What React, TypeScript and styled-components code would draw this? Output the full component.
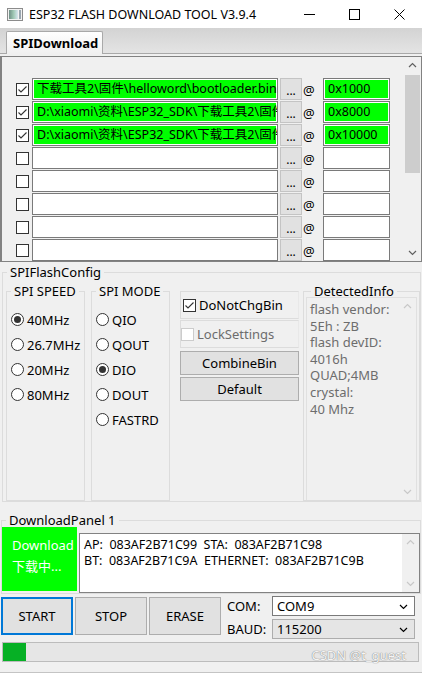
import React from 'react';
import styled, { createGlobalStyle } from 'styled-components';

const GlobalStyle = createGlobalStyle`
  html, body { margin: 0; padding: 0; background: #f0f0f0; }
  body {
    font-family: "Noto Sans", "Noto Sans CJK SC", sans-serif;
    font-size: 12.5px;
    color: #000;
  }
  * { box-sizing: border-box; }
`;

const files = [
  { on: true, path: '下载工具2\\固件\\helloword\\bootloader.bin', addr: '0x1000' },
  { on: true, path: 'D:\\xiaomi\\资料\\ESP32_SDK\\下载工具2\\固件', addr: '0x8000' },
  { on: true, path: 'D:\\xiaomi\\资料\\ESP32_SDK\\下载工具2\\固件', addr: '0x10000' },
  { on: false, path: '', addr: '' },
  { on: false, path: '', addr: '' },
  { on: false, path: '', addr: '' },
  { on: false, path: '', addr: '' },
  { on: false, path: '', addr: '' },
];

const speeds = [
  { label: '40MHz', on: true },
  { label: '26.7MHz', on: false },
  { label: '20MHz', on: false },
  { label: '80MHz', on: false },
];

const modes = [
  { label: 'QIO', on: false },
  { label: 'QOUT', on: false },
  { label: 'DIO', on: true },
  { label: 'DOUT', on: false },
  { label: 'FASTRD', on: false },
];

const detected = ['flash vendor:', '5Eh : ZB', 'flash devID:', '4016h', 'QUAD;4MB', 'crystal:', '40 Mhz'];

const Window = styled.div`
  position: relative;
  width: 422px;
  height: 673px;
  background: #f0f0f0;
  display: flex;
  flex-direction: column;
  overflow: hidden;
  border-bottom: 1px solid #c4c4c4;
`;

const TitleBar = styled.div`
  height: 28px;
  flex-shrink: 0;
  background: #fff;
  display: flex;
  align-items: center;
  padding-left: 7px;
`;

const Title = styled.span`
  flex: 1;
  margin-left: 6px;
  font-size: 12.5px;
  color: #000;
  white-space: nowrap;
`;

const WinButton = styled.span`
  width: 45px;
  height: 28px;
  display: flex;
  align-items: center;
  justify-content: center;
`;

const TabStrip = styled.div`
  height: 26px;
  flex-shrink: 0;
  display: flex;
  align-items: flex-end;
  padding-left: 6px;
  background: linear-gradient(#d3d3d3, #e4e4e4);
  border-bottom: 1px solid #a9a9a9;
`;

const Tab = styled.div`
  height: 23px;
  width: 97px;
  margin-bottom: -1px;
  padding-left: 6px;
  display: flex;
  align-items: center;
  font-weight: bold;
  font-size: 13px;
  background: linear-gradient(#ffffff, #f0f0f0);
  border: 1px solid #a9a9a9;
  border-bottom: none;
  border-radius: 2px 2px 0 0;
`;

const FileList = styled.div`
  margin-top: 2px;
  height: 206px;
  flex-shrink: 0;
  display: flex;
  border: 1px solid #828282;
  border-left-width: 2px;
`;

const Rows = styled.div`
  flex: 1;
  padding: 21px 0 0 14px;
  display: flex;
  flex-direction: column;
  gap: 1px;
  overflow: hidden;
`;

const Row = styled.div`
  height: 22px;
  flex-shrink: 0;
  display: flex;
  align-items: center;
`;

const Box = styled.span<{ $disabled?: boolean; $round?: boolean }>`
  width: 13px;
  height: 13px;
  flex-shrink: 0;
  display: flex;
  align-items: center;
  justify-content: center;
  background: #fff;
  border: 1px solid ${p => (p.$disabled ? '#cccccc' : '#333')};
  border-radius: ${p => (p.$round ? '50%' : '0')};
`;

const Dot = styled.span`
  width: 7px;
  height: 7px;
  border-radius: 50%;
  background: #333;
`;

const Field = styled.div<{ $green?: boolean; $width: number }>`
  width: ${p => p.$width}px;
  height: 22px;
  flex-shrink: 0;
  border: 1px solid #7a7a7a;
  box-shadow: inset 0 0 0 1px #fff;
  background: ${p => (p.$green ? '#00ff00' : '#fff')};
  padding-left: 4px;
  line-height: 20px;
  font-size: 12.5px;
  white-space: nowrap;
  overflow: hidden;
`;

const DotsButton = styled.span`
  width: 22px;
  height: 22px;
  flex-shrink: 0;
  margin-left: 2px;
  display: flex;
  align-items: center;
  justify-content: center;
  padding-top: 3px;
  background: #e1e1e1;
  border: 1px solid #c4c4c4;
  font-size: 12px;
`;

const At = styled.span`
  width: 13px;
  margin: 2px 7px 0 1px;
  font-size: 13px;
`;

const ScrollBar = styled.div<{ $light?: boolean }>`
  width: 17px;
  display: flex;
  flex-direction: column;
  align-items: stretch;
  background: #f0f0f0;
  color: ${p => (p.$light ? '#c8c8c8' : '#606060')};
`;

const Arrow = styled.span`
  height: 17px;
  flex-shrink: 0;
  display: flex;
  align-items: center;
  justify-content: center;
`;

const Thumb = styled.span`
  height: 98px;
  margin: 1px 1px 0;
  background: #cdcdcd;
`;

const Spacer = styled.span`
  flex: 1;
`;

/* a Windows-style group box: light frame with the caption sitting on its top line */
const GroupBox = styled.div`
  border: 1px solid #dcdcdc;
  display: flex;
  flex-direction: column;
`;

const Caption = styled.span<{ $indent?: number }>`
  align-self: flex-start;
  margin: -9px 0 0 ${p => p.$indent ?? 4}px;
  padding: 0 3px;
  background: #f0f0f0;
  font-size: 13px;
  line-height: 16px;
  white-space: nowrap;
`;

const FlashConfig = styled(GroupBox)`
  margin: 10px 1px 0 2px;
  height: 230px;
  flex-shrink: 0;
`;

const ConfigBody = styled.div`
  flex: 1;
  margin-top: 3px;
  padding-left: 3px;
  display: flex;
  align-items: stretch;
`;

const RadioBox = styled(GroupBox)<{ $last?: boolean }>`
  width: 79px;
  margin: 8px ${p => (p.$last ? 0 : 6)}px 0 0;
  padding-left: 4px;
`;

const Options = styled.div`
  padding-top: 8px;
  display: flex;
  flex-direction: column;
`;

const Option = styled.label`
  height: 25px;
  display: flex;
  align-items: center;
  gap: 3px;
  font-size: 13px;
`;

const Middle = styled.div`
  width: 133px;
  padding: 8px 4px 0 10px;
  display: flex;
  flex-direction: column;
`;

const Frame = styled.div<{ $inset: number }>`
  height: 28px;
  margin-bottom: 1px;
  padding-left: ${p => p.$inset}px;
  display: flex;
  align-items: center;
  gap: 3px;
  border: 1px solid #dcdcdc;
  border-right-color: #e8e8e8;
  font-size: 13px;
`;

const Muted = styled.span`
  color: #6d6d6d;
`;

const Button = styled.button<{ $focus?: boolean }>`
  font-family: inherit;
  font-size: 13px;
  color: #000;
  background: #e1e1e1;
  border: ${p => (p.$focus ? '2px solid #0078d7' : '1px solid #adadad')};
  padding: 0;
`;

const WideButton = styled(Button)`
  height: 24px;
  margin-top: 2px;
`;

const InfoGroup = styled(GroupBox)`
  flex: 1;
  margin-top: 8px;
  padding: 0 2px;
`;

const InfoBox = styled.div`
  flex: 1;
  margin-top: -2px;
  display: flex;
  border: 1px solid #e0e0e0;
  border-bottom: none;
`;

const InfoText = styled.div`
  flex: 1;
  padding: 3px 0 0 3px;
  color: #6d6d6d;
  font-size: 13px;
  line-height: 16.6px;
  white-space: nowrap;
`;

const DownloadPanel = styled(GroupBox)`
  margin: 18px 1px 0 1px;
  height: 74px;
  flex-shrink: 0;
`;

const PanelBody = styled.div`
  display: flex;
  align-items: flex-start;
  gap: 2px;
`;

const Status = styled.div`
  width: 75px;
  height: 64px;
  margin-top: -1px;
  background: #00ff00;
  color: #fff;
  padding: 8px 0 0 10px;
  font-size: 13px;
  line-height: 21px;
`;

const LogBox = styled.div`
  flex: 1;
  height: 60px;
  margin-top: 5px;
  display: flex;
  background: #fff;
  border: 1px solid #828282;
`;

const LogText = styled.div`
  flex: 1;
  padding: 3px 0 0 4px;
  font-size: 12.5px;
  line-height: 16px;
  white-space: pre;
`;

const Controls = styled.div`
  margin-top: 2px;
  padding-left: 1px;
  display: flex;
  align-items: flex-start;
`;

const BigButton = styled(Button)`
  width: 72px;
  height: 38px;
  margin: 1px 2px 0 0;
`;

const PortGrid = styled.div`
  margin-left: 4px;
  display: grid;
  grid-template-columns: 45px 143px;
  row-gap: 3px;
  align-items: center;
`;

const Select = styled.div<{ $gray?: boolean }>`
  height: 20px;
  padding: 0 6px 0 4px;
  display: flex;
  align-items: center;
  justify-content: space-between;
  font-size: 13px;
  background: ${p => (p.$gray ? '#e5e5e5' : '#fff')};
  border: 1px solid ${p => (p.$gray ? '#adadad' : '#7a7a7a')};
`;

const Label = styled.span`
  font-size: 13px;
`;

const Progress = styled.div`
  margin: 3px 3px 0 2px;
  height: 20px;
  flex-shrink: 0;
  background: #e6e6e6;
  border: 1px solid #bcbcbc;
  display: flex;
`;

const Fill = styled.div`
  background: #06b025;
`;

const Watermark = styled.span`
  position: absolute;
  right: 16px;
  bottom: 8px;
  font-size: 13px;
  color: #f4f4f4;
  text-shadow: 0 0 1px #8a8a8a, 0 0 1px #8a8a8a;
`;

const Chevron = ({ up, size = 9 }: { up?: boolean; size?: number }) => (
  <svg width={size} height={size} viewBox="0 0 9 9">
    <polyline
      points={up ? '1,6 4.5,2.5 8,6' : '1,3 4.5,6.5 8,3'}
      fill="none"
      stroke="currentColor"
      strokeWidth="1.2"
    />
  </svg>
);

const Checkbox = ({ checked, disabled }: { checked?: boolean; disabled?: boolean }) => (
  <Box $disabled={disabled}>
    {checked && (
      <svg width="11" height="11" viewBox="0 0 11 11">
        <polyline points="1.5,5.5 4,8 9.5,2.5" fill="none" stroke="#333" strokeWidth="1.1" />
      </svg>
    )}
  </Box>
);

const Radio = ({ checked }: { checked?: boolean }) => <Box $round>{checked && <Dot />}</Box>;

const VScroll = () => (
  <ScrollBar $light>
    <Arrow>
      <Chevron up />
    </Arrow>
    <Spacer />
    <Arrow>
      <Chevron />
    </Arrow>
  </ScrollBar>
);

function AppIcon() {
  return (
    <svg width="16" height="13" viewBox="0 0 16 13">
      <defs>
        <linearGradient id="ic" x1="0" x2="1">
          <stop offset="0" stopColor="#6f8f86" />
          <stop offset="0.5" stopColor="#9fc7b4" />
          <stop offset="1" stopColor="#d8e6ef" />
        </linearGradient>
      </defs>
      <rect x="0.5" y="0.5" width="15" height="12" fill="#f2f2f2" stroke="#8c8c8c" />
      <rect x="2" y="2" width="9" height="9" fill="url(#ic)" />
      <rect x="12" y="2" width="2" height="9" fill="#9aa6b0" />
    </svg>
  );
}

export default function App() {
  return (
    <Window>
      <GlobalStyle />
      <TitleBar>
        <AppIcon />
        <Title>ESP32 FLASH DOWNLOAD TOOL V3.9.4</Title>
        <WinButton>
          <svg width="11" height="11" viewBox="0 0 11 11">
            <line x1="0" y1="5.5" x2="11" y2="5.5" stroke="#000" />
          </svg>
        </WinButton>
        <WinButton>
          <svg width="11" height="11" viewBox="0 0 11 11">
            <rect x="0.5" y="0.5" width="10" height="10" fill="none" stroke="#000" />
          </svg>
        </WinButton>
        <WinButton>
          <svg width="11" height="11" viewBox="0 0 11 11">
            <path d="M0.5 0.5 L10.5 10.5 M10.5 0.5 L0.5 10.5" stroke="#000" />
          </svg>
        </WinButton>
      </TitleBar>

      <TabStrip>
        <Tab>SPIDownload</Tab>
      </TabStrip>

      <FileList>
        <Rows>
          {files.map((f, i) => (
            <Row key={i}>
              <Checkbox checked={f.on} />
              <Field $green={f.on} $width={246} style={{ marginLeft: 3 }}>
                {f.path}
              </Field>
              <DotsButton>...</DotsButton>
              <At>@</At>
              <Field $green={f.on} $width={67}>
                {f.addr}
              </Field>
            </Row>
          ))}
        </Rows>
        <ScrollBar>
          <Arrow>
            <Chevron up />
          </Arrow>
          <Thumb />
          <Spacer />
          <Arrow>
            <Chevron />
          </Arrow>
        </ScrollBar>
      </FileList>

      <FlashConfig>
        <Caption>SPIFlashConfig</Caption>
        <ConfigBody>
          <RadioBox>
            <Caption $indent={0}>SPI SPEED</Caption>
            <Options>
              {speeds.map(s => (
                <Option key={s.label}>
                  <Radio checked={s.on} />
                  {s.label}
                </Option>
              ))}
            </Options>
          </RadioBox>
          <RadioBox $last>
            <Caption $indent={0}>SPI MODE</Caption>
            <Options>
              {modes.map(m => (
                <Option key={m.label}>
                  <Radio checked={m.on} />
                  {m.label}
                </Option>
              ))}
            </Options>
          </RadioBox>
          <Middle>
            <Frame $inset={2}>
              <Checkbox checked />
              DoNotChgBin
            </Frame>
            <Frame $inset={0}>
              <Checkbox disabled />
              <Muted>LockSettings</Muted>
            </Frame>
            <WideButton>CombineBin</WideButton>
            <WideButton>Default</WideButton>
          </Middle>
          <InfoGroup>
            <Caption $indent={5}>DetectedInfo</Caption>
            <InfoBox>
              <InfoText>
                {detected.map(line => (
                  <div key={line}>{line}</div>
                ))}
              </InfoText>
              <VScroll />
            </InfoBox>
          </InfoGroup>
        </ConfigBody>
      </FlashConfig>

      <DownloadPanel>
        <Caption>DownloadPanel 1</Caption>
        <PanelBody>
          <Status>
            <div>Download</div>
            <div>下载中...</div>
          </Status>
          <LogBox>
            <LogText>
              {'AP:  083AF2B71C99  STA:  083AF2B71C98\nBT:  083AF2B71C9A  ETHERNET:  083AF2B71C9B'}
            </LogText>
            <VScroll />
          </LogBox>
        </PanelBody>
      </DownloadPanel>

      <Controls>
        <BigButton $focus>START</BigButton>
        <BigButton>STOP</BigButton>
        <BigButton>ERASE</BigButton>
        <PortGrid>
          <Label>COM:</Label>
          <Select>
            COM9
            <Chevron />
          </Select>
          <Label>BAUD:</Label>
          <Select $gray>
            115200
            <Chevron />
          </Select>
        </PortGrid>
      </Controls>

      <Progress>
        <Fill style={{ width: `${(23 / 416) * 100}%` }} />
      </Progress>

      <Watermark>CSDN @t_guest</Watermark>
    </Window>
  );
}
